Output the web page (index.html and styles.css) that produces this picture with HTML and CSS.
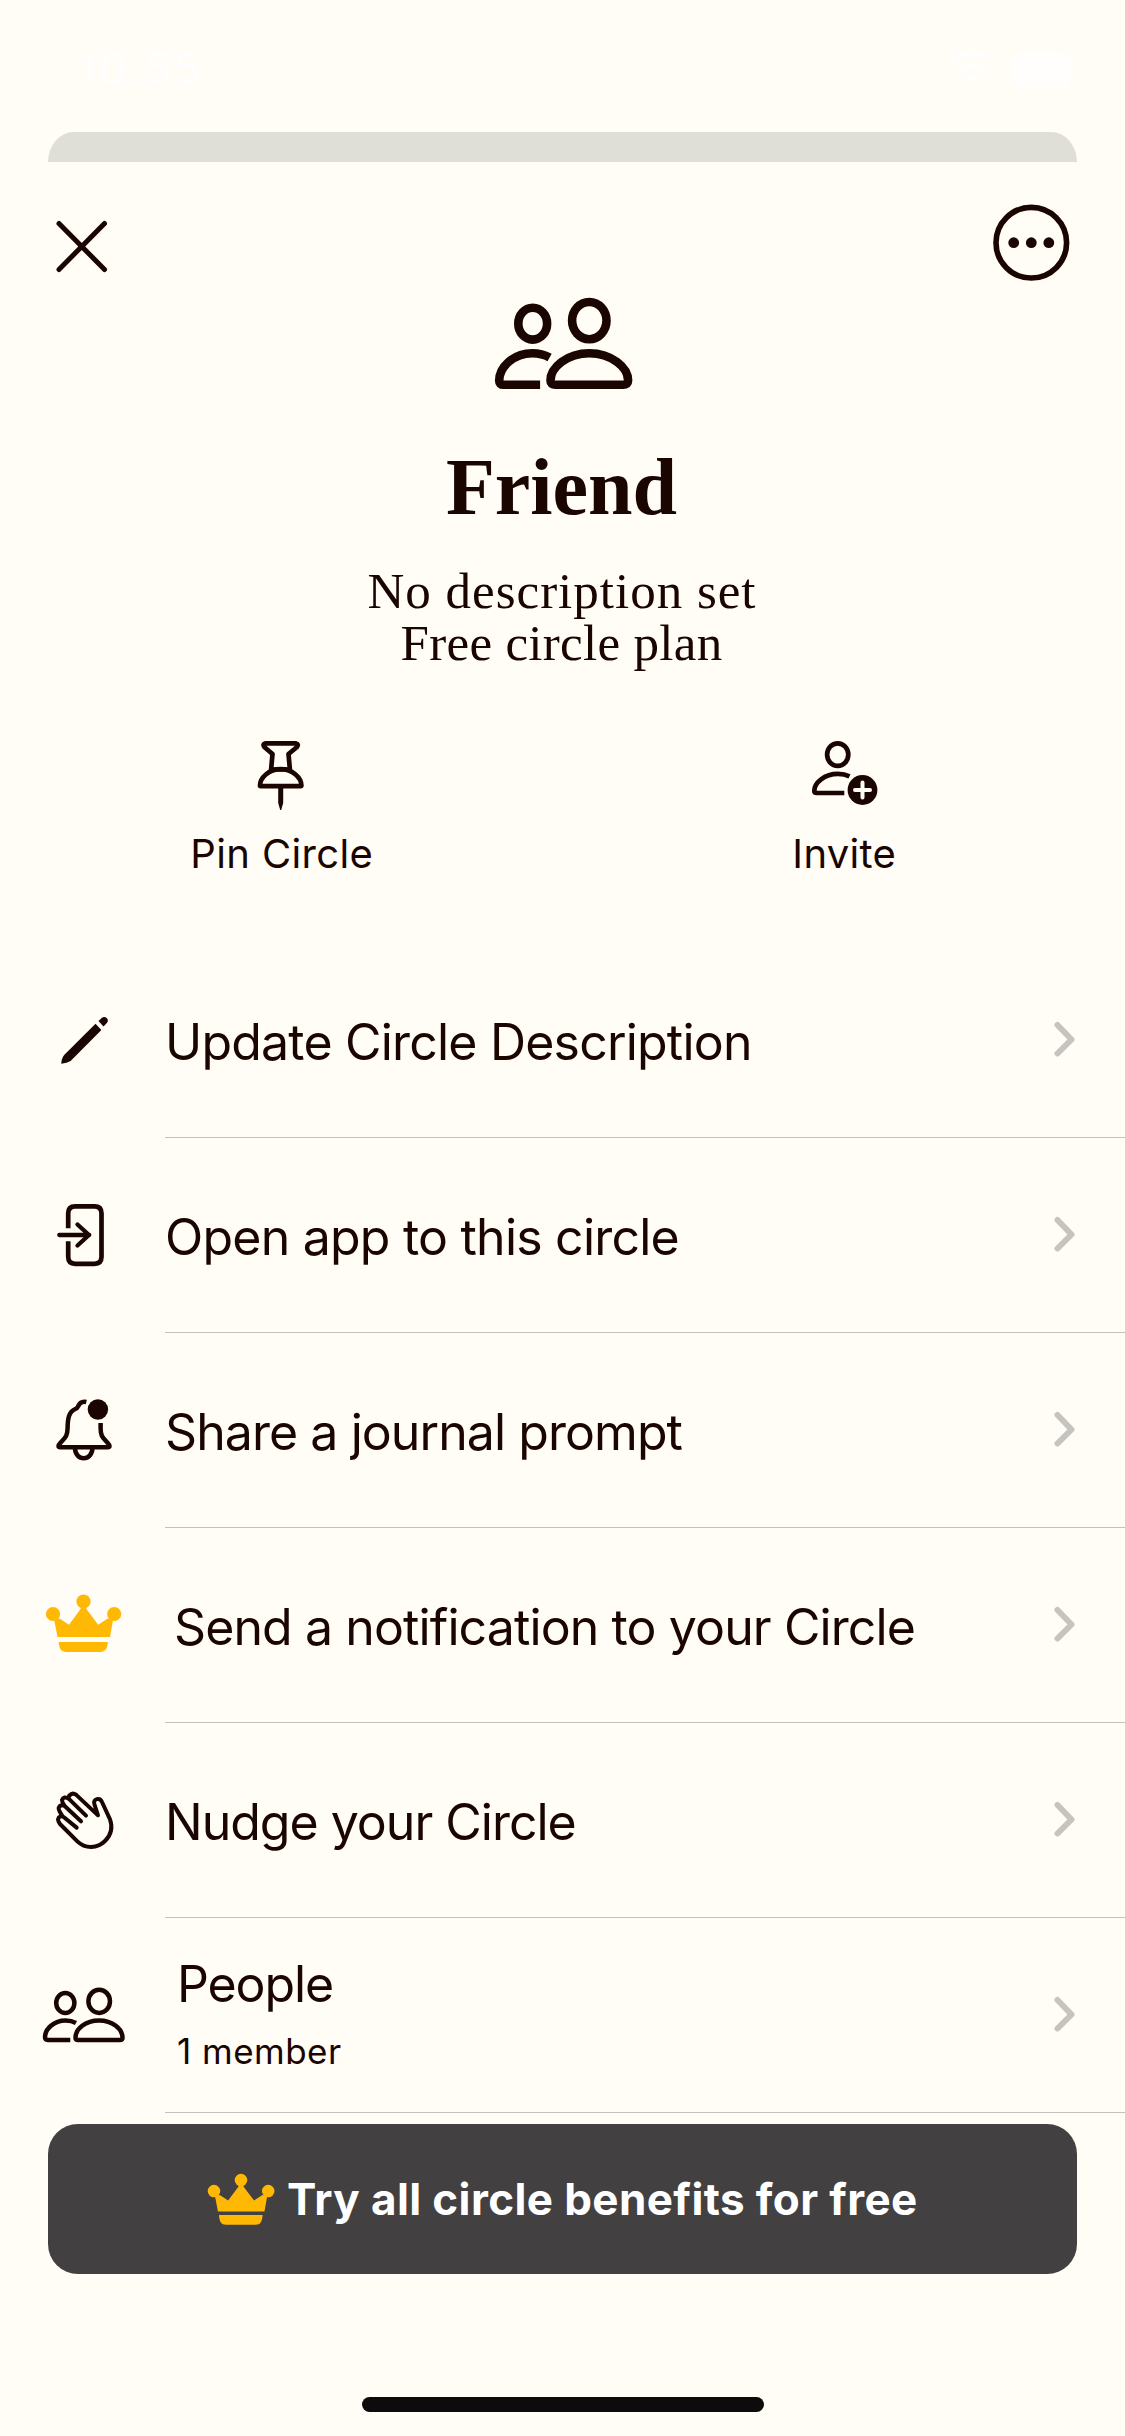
FILE: index.html
```html
<!DOCTYPE html>
<html lang="en">
<head>
<meta charset="utf-8">
<title>Friend</title>
<link rel="stylesheet" href="styles.css">
</head>
<body>
<div class="screen">
  <header class="status">
    <span class="time">10:55</span>
    <svg class="indicators" viewBox="950 46 128 46" width="128" height="46">
      <g fill="none" stroke="#fff" stroke-width="6"><path d="M953 61Q971 45 989 61M960 70Q971 61 982 70"/></g>
      <path d="M971 84l-6-7q6-5 12 0z" fill="#fff"/>
      <rect x="1011" y="52" width="60" height="36" rx="10" fill="#fff"/>
      <path d="M1073 63q5 7 0 14z" fill="#fff"/>
    </svg>
  </header>
  <div class="sheet-edge"></div>

  <nav class="topbar">
    <svg class="close" viewBox="54 219 56 56" width="56" height="56" fill="none" stroke="#1a0501" stroke-width="5" stroke-linecap="round"><path d="M59 223.500l45.500 46M104.500 223.500l-45.500 46"/></svg>
    <svg viewBox="993 204 77 77" width="77" height="77" fill="#1a0501"><circle cx="1031.300" cy="242.700" r="35.300" fill="none" stroke="#1a0501" stroke-width="5.600"/><circle cx="1013.700" cy="242.700" r="5.400"/><circle cx="1031.300" cy="242.700" r="5.400"/><circle cx="1048.800" cy="242.700" r="5.400"/></svg>
  </nav>

  <section class="hero">
    <svg viewBox="490 294 147 100" width="147" height="100" fill="none" stroke="#1a0501" stroke-width="8.600">
      <ellipse cx="532.700" cy="323.700" rx="14.400" ry="15.900"/>
      <ellipse cx="589.300" cy="320.600" rx="17.200" ry="18.600"/>
      <path d="M589.300 353.200c22 0 38.800 14 38.800 27.300q0 4.300-5 4.300h-67.600q-5 0-5-4.300c0-13.300 16.800-27.300 38.800-27.300z"/>
      <path d="M549.600 357.400q-7.600-4.200-17.300-4.200c-19 0-33.100 14-33.100 27.500q0 4.100 4.300 4.100h36.600"/>
    </svg>
    <h1 class="name">Friend</h1>
    <p class="desc">No description set</p>
    <p class="plan">Free circle plan</p>
  </section>

  <section class="actions">
    <div class="action">
      <svg viewBox="231 730 100 90" width="100" height="90" fill="none" stroke="#1a0501" stroke-width="4.700" stroke-linejoin="round">
        <path d="M265.500 743.400h30.500q3 .8 1 3.600l-8.500 7 1.400 15.500h-18.800l1.400-15.500-8.200-7q-2-3 1.200-3.600z"/>
        <path d="M280.700 769.200c12 0 20.700 8.500 20.700 16.300q0 .6-.8.600h-39.800q-.8 0-.8-.6c0-7.800 8.700-16.300 20.700-16.300z"/>
        <path d="M278.200 788h5v15l-2 7h-1l-2-7z" fill="#1a0501" stroke="none"/>
      </svg>
      <span class="action-label pin">Pin Circle</span>
    </div>
    <div class="action">
      <svg viewBox="794 730 100 90" width="100" height="90" fill="none" stroke="#1a0501" stroke-width="4.700">
        <ellipse cx="837.700" cy="754.600" rx="10.600" ry="11.300"/>
        <path d="M849.500 776.300q-5-2.500-11.500-2.500c-13.500 0-23.700 9-23.700 17q0 2.200 2.500 2.200h27.500"/>
        <circle cx="862.500" cy="790" r="14.900" fill="#1a0501" stroke="none"/>
        <path d="M862.500 782.500v15M855 790h15" stroke="#fffdf6" stroke-width="4" stroke-linecap="round"/>
      </svg>
      <span class="action-label invite">Invite</span>
    </div>
  </section>

  <ul class="menu">
    <li class="row">
      <svg viewBox="0 943 165 194" width="165" height="194" fill="#1a0501">
        <path d="M95.500 1023.800l5.900 6.100-30.800 31q-3.500 2.200-9.400 2.800.5-6 3.200-9z"/>
        <path d="M98.500 1021.100l3.200-3.200q2.700-2 5 .200 2.300 2.300.200 5l-3.400 3.300z"/>
      </svg>
      <div class="cell"><span class="label update">Update Circle Description</span><svg class="chev" viewBox="0 0 24 40" width="24" height="40"><path d="M4.500 5L18.500 19.500 4.500 33.500"/></svg></div>
    </li>
    <li class="row">
      <svg viewBox="0 1138 165 194" width="165" height="194" fill="none" stroke="#1a0501" stroke-width="4.700">
        <path d="M68.200 1228.300v-15q0-7 7-7h19.300q7 0 7 7v43.500q0 7-7 7h-19.300q-7 0-7-7v-15.500"/>
        <path d="M59.300 1235h30M77.500 1224.500l11.500 10.500-11.500 10.500" stroke-linecap="round" stroke-linejoin="round" stroke-width="4.300"/>
      </svg>
      <div class="cell"><span class="label open">Open app to this circle</span><svg class="chev" viewBox="0 0 24 40" width="24" height="40"><path d="M4.500 5L18.500 19.500 4.500 33.500"/></svg></div>
    </li>
    <li class="row">
      <svg viewBox="0 1333 165 194" width="165" height="194" fill="none" stroke="#1a0501" stroke-width="4.500">
        <path d="M86.300 1402q-5.800-1.400-8.300 4.500-.7 1.800-2.700 2.500c-6.800 2.800-7.600 10.500-7.700 19-.2 8.500-2.500 9.500-7.300 15-2 2.200-2.800 4.200 0 4.200h47.400c2.800 0 2-2 0-4.200-4.800-5.500-7.100-6.500-7.100-15v-5"/>
        <path d="M75 1448c0 13.500 17.400 13.500 17.400 0"/>
        <circle cx="97.900" cy="1409.500" r="10.200" fill="#1a0501" stroke="none"/>
      </svg>
      <div class="cell"><span class="label share">Share a journal prompt</span><svg class="chev" viewBox="0 0 24 40" width="24" height="40"><path d="M4.500 5L18.500 19.500 4.500 33.500"/></svg></div>
    </li>
    <li class="row">
      <svg viewBox="0 1528 165 194" width="165" height="194" fill="#ffb905">
        <circle cx="53" cy="1614" r="7.100"/><circle cx="83.500" cy="1601.600" r="7.100"/><circle cx="114.200" cy="1614" r="7.100"/>
        <path d="M54 1619l5.500-.500 9.500 6.200 10.500-14.200q2-2.500 2-6h4q0 3.500 2 6l10.700 14.200 9.500-6.200 5.500.500-3.200 18h-52.500z"/>
        <path d="M58.600 1642h49.300c-.6 6.500-2.300 10-8 10h-33.300c-5.700 0-7.400-3.500-8-10z"/>
      </svg>
      <div class="cell"><span class="label send">Send a notification to your Circle</span><svg class="chev" viewBox="0 0 24 40" width="24" height="40"><path d="M4.500 5L18.500 19.500 4.500 33.500"/></svg></div>
    </li>
    <li class="row">
      <svg viewBox="0 1723 165 194" width="165" height="194" fill="none" stroke="#1a0501" stroke-linecap="round" stroke-linejoin="round">
        <g transform="translate(40 1770) scale(.33333)" stroke-width="12">
          <path d="M110 173L71 141Q57 135 54 148Q54 154 60 162L112 214C136 237 172 236 195 213C214 194 218 170 210 148L186 96C180 81 158 86 163 102L174 136L108 74Q97 66 88 77"/>
          <path d="M123 154L74 108Q60 102 56 114Q55 120 66 136M138 137L86 86Q71 77 66 90Q66 97 74 108M88 77L84 84"/>
        </g>
      </svg>
      <div class="cell"><span class="label nudge">Nudge your Circle</span><svg class="chev" viewBox="0 0 24 40" width="24" height="40"><path d="M4.500 5L18.500 19.500 4.500 33.500"/></svg></div>
    </li>
    <li class="row">
      <svg viewBox="0 1918 165 194" width="165" height="194" fill="none" stroke="#1a0501" stroke-width="4.500">
        <ellipse cx="65.300" cy="2003" rx="9.100" ry="9.900"/>
        <ellipse cx="99.200" cy="2001.300" rx="10.800" ry="11.600"/>
        <path d="M99 2020.500c13.500 0 23.500 8.500 23.500 17.200q0 2.200-2.500 2.200h-42q-2.500 0-2.500-2.200c0-8.700 10-17.200 23.500-17.200z"/>
        <path d="M76 2022.900q-4.500-2.400-10.500-2.400c-11.500 0-20.500 8.500-20.500 16.600q0 2.800 2.700 2.800h22.600"/>
      </svg>
      <div class="cell"><div class="people"><span class="label member-title">People</span><span class="sub">1 member</span></div><svg class="chev" viewBox="0 0 24 40" width="24" height="40"><path d="M4.500 5L18.500 19.500 4.500 33.500"/></svg></div>
    </li>
  </ul>

  <button class="cta">
    <svg viewBox="44 1592.500 79 62" width="70" height="55" fill="#ffb905">
      <circle cx="53" cy="1614" r="7.100"/><circle cx="83.500" cy="1601.600" r="7.100"/><circle cx="114.200" cy="1614" r="7.100"/>
      <path d="M54 1619l5.500-.500 9.500 6.200 10.500-14.200q2-2.500 2-6h4q0 3.500 2 6l10.700 14.200 9.500-6.200 5.500.500-3.200 18h-52.500z"/>
      <path d="M58.600 1641h49.300c-.6 7.500-2.300 11-8 11h-33.300c-5.700 0-7.400-3.500-8-11z"/>
    </svg>
    <span>Try all circle benefits for free</span>
  </button>
  <div class="home"></div>
</div>
</body>
</html>
```
FILE: styles.css
```css
* { box-sizing: border-box; margin: 0; padding: 0; }
body { background: #fffdf6; color: #1a0501; font-family: Inter, "Liberation Sans", sans-serif; }
.screen { width: 1125px; height: 2436px; display: flex; flex-direction: column; background: #fffdf6; overflow: hidden; }
svg { display: block; flex: none; }

.status { height: 132px; padding: 46px 47px 0 78px; display: flex; justify-content: space-between; align-items: flex-start; }
.time { font-size: 45px; font-weight: 600; line-height: 46px; letter-spacing: 0.9px; color: #fff; }
.indicators, .time { opacity: 0.8; }
.sheet-edge { height: 30px; margin: 0 48px; background: #dfdfd8; border-radius: 26px 26px 0 0 / 30px 30px 0 0; }

.topbar { height: 132px; padding: 42px 55px 0 54px; display: flex; justify-content: space-between; align-items: flex-start; }
.close { margin-top: 15px; }

.hero { display: flex; flex-direction: column; align-items: center; text-align: center; font-family: "Liberation Serif", serif; padding-left: 2px; }
.name { margin: 43px 4px 0 0; font-size: 80px; line-height: 100px; font-weight: 700; }
.desc { margin: 28px 3px 0 0; font-size: 51px; line-height: 52px; letter-spacing: 1px; }
.plan { margin-right: 4px; font-size: 51px; line-height: 52px; letter-spacing: 0.3px; }

.actions { display: flex; margin-top: 61px; height: 213px; }
.action { flex: 1; display: flex; flex-direction: column; align-items: center; }
.action-label { margin-top: 9px; font-size: 40px; line-height: 50px; padding-left: 1px; }
.pin { letter-spacing: 0.35px; }
.invite { letter-spacing: 0.3px; }

.menu { list-style: none; }
.row { display: flex; height: 195px; }
.cell { flex: 1; display: flex; justify-content: space-between; align-items: center; padding-right: 48px; border-bottom: 1px solid #c4c1bc; }
.label { font-size: 50px; line-height: 60px; padding-top: 4px; white-space: nowrap; }
.update { letter-spacing: -0.8px; }
.open { letter-spacing: -0.78px; }
.share { letter-spacing: -0.93px; }
.send { letter-spacing: -0.89px; padding-left: 9px; }
.nudge { letter-spacing: -1px; }
.people { display: flex; flex-direction: column; padding-left: 12px; }
.member-title { letter-spacing: -1.1px; margin-top: -1px; padding: 0; }
.sub { margin: 12px 0 0; font-size: 35px; line-height: 50px; letter-spacing: 0.48px; }
.chev { fill: none; stroke: #c6c4bf; stroke-width: 6; stroke-linecap: round; stroke-linejoin: round; }

.cta { margin: 11px 48px 0; height: 150px; border: 0; border-radius: 30px; background: #434041; color: #fff; display: flex; align-items: center; justify-content: flex-start; gap: 11px; padding-left: 158px; font-family: Inter, "Liberation Sans", sans-serif; font-size: 44px; font-weight: 700; line-height: 60px; letter-spacing: 0.39px; white-space: nowrap; }
.home { width: 402px; height: 15px; margin: 123px auto 0; border-radius: 8px; background: #0d0b0b; }
```
